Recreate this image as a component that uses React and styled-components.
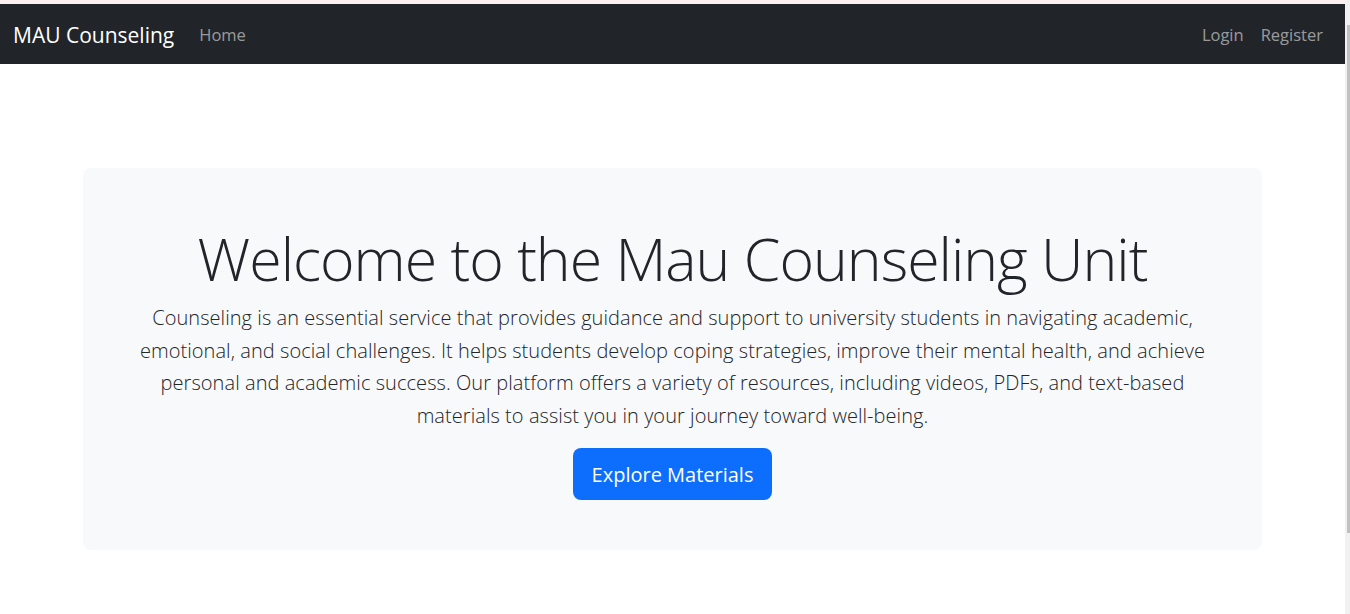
import React from "react";
import styled, { createGlobalStyle } from "styled-components";

const links = ["Login", "Register"];

function App() {
    return (
        <>
            <GlobalStyle />
            <Page>
                <Content>
                    <TopStrip />
                    <NavBar>
                        <NavLeft>
                            <Brand href="#">MAU Counseling</Brand>
                            <NavLink href="#">Home</NavLink>
                        </NavLeft>
                        <NavRight>
                            {links.map(link => (
                                <NavLink key={link} href="#">
                                    {link}
                                </NavLink>
                            ))}
                        </NavRight>
                    </NavBar>
                    <Main>
                        <Jumbotron>
                            <Title>Welcome to the Mau Counseling Unit</Title>
                            <Lead>
                                Counseling is an essential service that provides guidance and
                                support to university students in navigating academic, emotional,
                                and social challenges. It helps students develop coping strategies,
                                improve their mental health, and achieve personal and academic
                                success. Our platform offers a variety of resources, including
                                videos, PDFs, and text-based materials to assist you in your journey
                                toward well-being.
                            </Lead>
                            <PrimaryButton href="#">Explore Materials</PrimaryButton>
                        </Jumbotron>
                    </Main>
                </Content>
                <ScrollTrack>
                    <ScrollThumb />
                </ScrollTrack>
            </Page>
        </>
    );
}

const GlobalStyle = createGlobalStyle`
    body {
        margin: 0;
        overflow: hidden;
        background: #fff;
        font-family: "Open Sans", "Noto Sans", sans-serif;
        color: #212529;
    }
`;

const Page = styled.div`
    display: flex;
    height: 614px;
`;

const Content = styled.div`
    flex: 1;
    min-width: 0;
`;

// fake browser scrollbar on the right edge
const ScrollTrack = styled.div`
    width: 5px;
    background: #f1f1f1;
    padding-top: 25px;
    box-sizing: border-box;
`;

const ScrollThumb = styled.div`
    width: 3px;
    height: 508px;
    margin-left: 2px;
    background: #c1c1c1;
`;

const TopStrip = styled.div`
    height: 4px;
    background: #fcf0f0;
`;

const NavBar = styled.nav`
    height: 60px;
    background: #212529;
    display: flex;
    align-items: center;
    justify-content: space-between;
    padding: 0 22px 0 13px;
`;

const NavLeft = styled.div`
    display: flex;
    align-items: center;
    gap: 25px;
`;

const NavRight = styled.div`
    display: flex;
    align-items: center;
    gap: 17px;
`;

const Brand = styled.a`
    color: #fff;
    font-size: 21px;
    text-decoration: none;
    line-height: 1;
    padding-top: 2px;
`;

const NavLink = styled.a`
    color: rgba(255, 255, 255, 0.55);
    font-size: 16.5px;
    text-decoration: none;
    line-height: 1;
    padding-top: 2px;
`;

const Main = styled.main`
    padding-top: 104px;
`;

const Jumbotron = styled.section`
    max-width: 1179px;
    margin: 0 auto;
    box-sizing: border-box;
    padding: 54px 48px 50px;
    background: #f8f9fa;
    border-radius: 8px;
    display: flex;
    flex-direction: column;
    align-items: center;
    text-align: center;
`;

const Title = styled.h1`
    margin: 0 0 8px;
    font-size: 59px;
    font-weight: 300;
    letter-spacing: -1px;
    line-height: 72px;
    color: #212529;
`;

const Lead = styled.p`
    margin: 0 0 16px;
    font-size: 20px;
    font-weight: 300;
    letter-spacing: 0.06px;
    line-height: 32.5px;
    color: #212529;
`;

const PrimaryButton = styled.a`
    display: inline-flex;
    align-items: center;
    justify-content: center;
    width: 199px;
    height: 52px;
    box-sizing: border-box;
    background: #0d6efd;
    color: #fff;
    border-radius: 8px;
    font-size: 20px;
    text-decoration: none;
`;

export default App;
